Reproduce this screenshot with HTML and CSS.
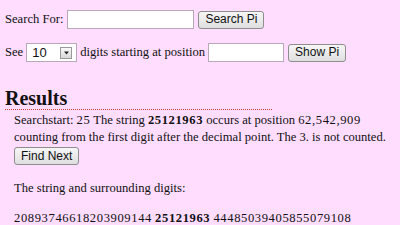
FILE: index.html
```html
<html>
<head>
	<title>Pi Search</title>
	<link rel="stylesheet" href="styles.css">
</head>
<body>

	<form class="search">
		<div class="row">
			Search For: <input type="text" class="field wide"> <button type="button" class="btn">Search Pi</button>
		</div>
		<div class="row">
			See
			<span class="select">
				<span class="select-value">10</span>
				<span class="select-arrow">
					<svg width="9" height="9" viewBox="0 0 9 9"><path d="M2 3.5h5l-2.5 3z" fill="#222"/></svg>
				</span>
			</span>
			digits starting at position <input type="text" class="field short"> <button type="button" class="btn">Show Pi</button>
		</div>
	</form>

	<h2 class="results">Results</h2>

	<div class="output">
		<div class="line">Searchstart: <span class="num">25</span> The string <b class="num">25121963</b> occurs at position <span class="num">62,542,909</span></div>
		<div class="line">counting from the first digit after the decimal point. The 3. is not counted.</div>
		<button type="button" class="btn">Find Next</button>

		<p class="plain">The string and surrounding digits:</p>
		<p class="plain"><span class="num">20893746618203909144</span> <b class="num">25121963</b> <span class="num">44485039405855079108</span></p>
	</div>

</body>
</html>
```

FILE: styles.css
```css
body {
	background: #ffddff;
	color: #111;
	margin: 0;
	padding: 0 5px;
	font-family: "Liberation Serif", "Times New Roman", serif;
	font-size: 12.6px;
	overflow: hidden;
}
.num {
	letter-spacing: 0.6px;
}
.search {
	margin: 0;
	padding-top: 10px;
}
.row {
	display: flex;
	align-items: center;
	gap: 3px;
	height: 19px;
	margin-bottom: 14px;
}
.field {
	background: white;
	border: 1px solid #b8a8b8;
	height: 19px;
	box-sizing: border-box;
	margin: 0;
	padding: 0 2px;
}
.wide {
	width: 127px;
	margin-left: 1px;
}
.short {
	width: 76px;
}
.btn {
	font-family: "Liberation Sans", Arial, sans-serif;
	font-size: 12px;
	color: #111;
	background: linear-gradient(#f6f6f6, #dedede);
	border: 1px solid #8e8e8e;
	border-radius: 3px;
	height: 18px;
	padding: 0 6px;
	margin: 0 0 0 1px;
	line-height: 15px;
}
.select {
	display: inline-flex;
	align-items: center;
	justify-content: space-between;
	width: 51px;
	height: 19px;
	box-sizing: border-box;
	background: white;
	border: 1px solid #b8a8b8;
	padding: 0 4px 0 5px;
	font-family: "Liberation Sans", Arial, sans-serif;
	font-size: 13px;
}
.select-arrow {
	display: inline-flex;
	width: 12px;
	height: 12px;
	align-items: center;
	justify-content: center;
	border: 1px solid #999;
	background: linear-gradient(#fafafa, #d8d8d8);
	box-sizing: border-box;
}
.results {
	font-size: 20px;
	font-weight: bold;
	margin: 25px 0 0 0;
	padding: 0;
	line-height: 22px;
	width: 267px;
	border-bottom: 1px dotted #d04040;
}
.output {
	margin-left: 9px;
	line-height: 17px;
	padding-top: 2px;
	white-space: nowrap;
}
.output .btn {
	margin: 1px 0 0 0;
}
.plain {
	margin: 0;
	margin-top: 15px;
	line-height: 17px;
}
.plain + .plain {
	margin-top: 13px;
}
```
